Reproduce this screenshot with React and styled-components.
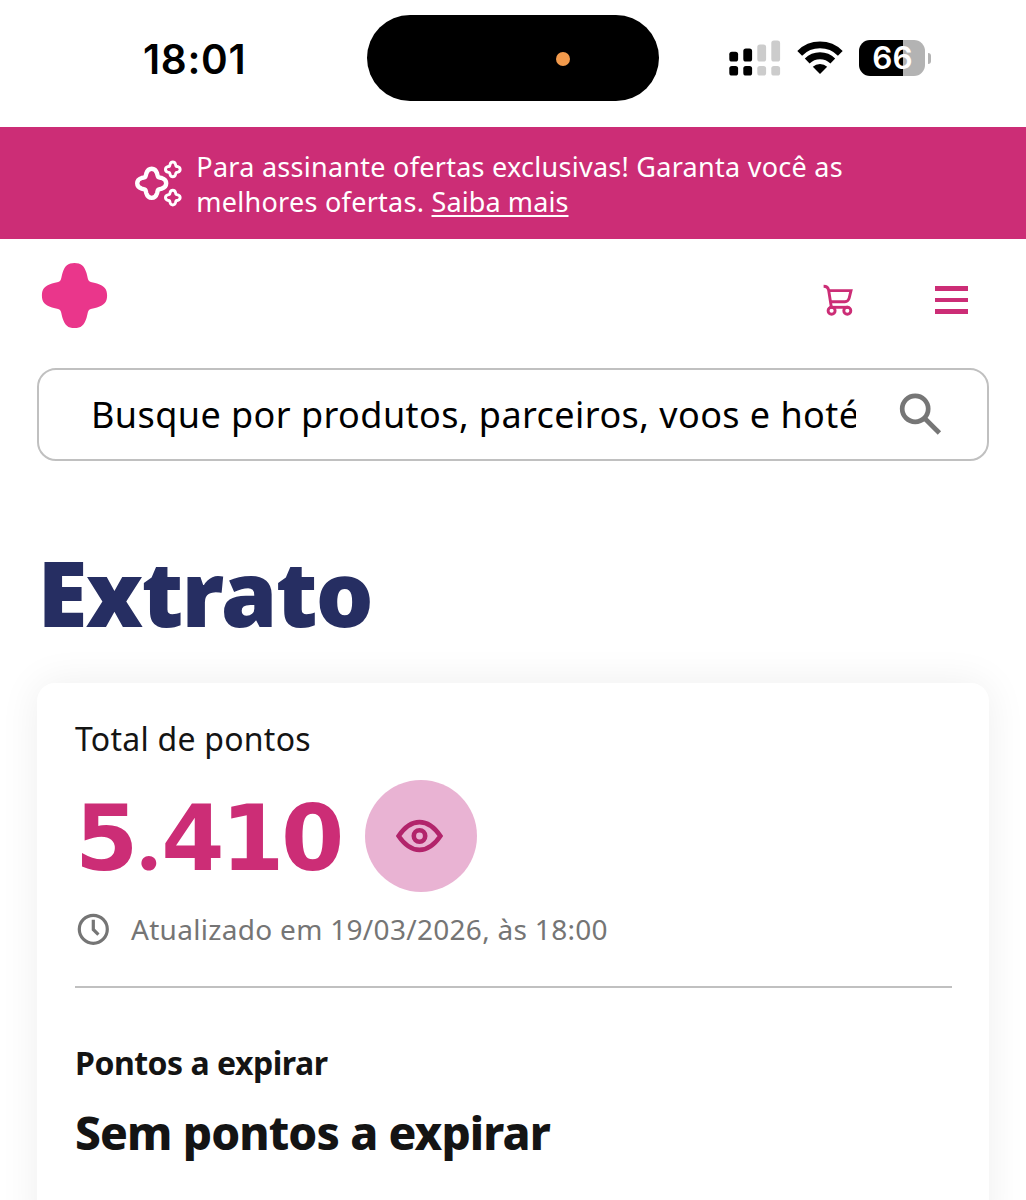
import React from 'react';
import styled, { createGlobalStyle } from 'styled-components';

const GlobalStyle = createGlobalStyle`
  * {
    box-sizing: border-box;
  }
  body {
    margin: 0;
    background: #ffffff;
    font-family: "Noto Sans", "Open Sans", sans-serif;
  }
  svg {
    display: block;
    flex: none;
  }
`

const Page = styled.div`
  display: flex;
  flex-direction: column;
  width: 1026px;
  height: 1200px;
  overflow: hidden;
  background: #ffffff;
`

/* status bar */
const StatusBar = styled.div`
  display: flex;
  flex: none;
  align-items: flex-start;
  height: 127px;
  padding: 15px 95px 0 143px;
`
const Time = styled.div`
  width: 224px;
  padding-top: 20px;
  font: 600 40.5px/50px Inter, sans-serif;
  letter-spacing: 0.7px;
  color: #000000;
`
const Island = styled.div`
  display: flex;
  align-items: center;
  justify-content: flex-end;
  width: 292px;
  height: 86px;
  padding-right: 89px;
  border-radius: 43px;
  background: #000000;
`
const RecordingDot = styled.div`
  width: 14px;
  height: 14px;
  margin-top: 2px;
  border-radius: 50%;
  background: #f39a4c;
`
const StatusIcons = styled.div`
  display: flex;
  align-items: flex-start;
  gap: 16px;
  margin-left: auto;
  padding-top: 25px;
`
const BatteryIcon = styled.div`
  display: flex;
  align-items: center;
  gap: 3px;
`
const BatteryBody = styled.div`
  width: 66px;
  height: 36px;
  padding-left: 1px;
  border-radius: 11px;
  background: linear-gradient(to right, #000000 66%, #b3b3b3 66%);
  font: 600 31.5px/36px Inter, sans-serif;
  text-align: center;
  color: #ffffff;
`
const BatteryTip = styled.div`
  width: 3px;
  height: 11px;
  border-radius: 0 5px 5px 0;
  background: #b3b3b3;
`

/* offers banner */
const Banner = styled.div`
  display: flex;
  flex: none;
  align-items: center;
  height: 112px;
  padding-left: 133px;
  background: #cc2d76;
`
const BannerText = styled.p`
  margin: 1px 0 0 12.3px;
  font-size: 27px;
  line-height: 35px;
  letter-spacing: 0.27px;
  white-space: nowrap;
  color: #ffffff;
`
const BannerLink = styled.a`
  letter-spacing: 0.1px;
  color: inherit;
  text-decoration: underline;
  text-decoration-thickness: 2px;
  text-underline-offset: 3px;
`

/* header */
const Header = styled.header`
  display: flex;
  flex: none;
  align-items: flex-start;
  height: 129px;
  padding: 23px 58px 0 41px;
`
const CartButton = styled.button`
  margin: 18px 79px 0 auto;
  padding: 0;
  border: none;
  background: transparent;
`
const Burger = styled.button`
  display: flex;
  flex-direction: column;
  gap: 7px;
  margin-top: 24px;
  padding: 0;
  border: none;
  background: transparent;

  div {
    width: 33px;
    height: 4.6px;
    background: #cc2d76;
  }
`
const SearchBox = styled.div`
  display: flex;
  flex: none;
  align-items: center;
  justify-content: space-between;
  height: 93px;
  margin: 0 37px;
  padding: 0 44px 0 52px;
  border: 2px solid #c0c0c0;
  border-radius: 19px;
`
const SearchText = styled.div`
  width: 765px;
  padding-top: 1px;
  overflow: hidden;
  font-size: 36px;
  line-height: 56px;
  letter-spacing: 0.44px;
  white-space: nowrap;
  color: #000000;
`

const Title = styled.h1`
  flex: none;
  margin: 81px 0 0 37.5px;
  font-size: 91px;
  font-weight: 900;
  line-height: 100px;
  letter-spacing: -1.7px;
  color: #262e62;
`

/* points card */
const Card = styled.section`
  flex: none;
  height: 560px;
  margin: 41px 37px 0;
  padding: 34px 38px 0;
  border-radius: 18px;
  background: #ffffff;
  box-shadow: 0 0 40px rgba(0, 0, 0, 0.07);
`
const Text = styled.p`
  margin: ${({ top }) => top || 0}px 0 0;
  font-size: ${({ size }) => size}px;
  font-weight: ${({ weight }) => weight || 400};
  line-height: ${({ line }) => line}px;
  letter-spacing: ${({ spacing }) => spacing || 0}px;
  white-space: nowrap;
  color: ${({ color }) => color || '#141414'};
`
const PointsRow = styled.div`
  display: flex;
  align-items: center;
  height: 112px;
  margin-top: 19px;
`
const Points = styled.div`
  width: 289.5px;
  padding-top: 2px;
  font: 700 91px/100px "DejaVu Sans", sans-serif;
  letter-spacing: -3.4px;
  white-space: nowrap;
  color: #cc2d76;

  span {
    margin: 0 5px 0 3px;
    font-family: Lato, sans-serif;
    font-weight: 900;
  }
`
const EyeButton = styled.button`
  display: flex;
  align-items: center;
  justify-content: center;
  width: 112px;
  height: 112px;
  padding: 0 1px 0 0;
  border: none;
  border-radius: 50%;
  background: #e9b3d3;
`
const Updated = styled.div`
  display: flex;
  align-items: center;
  gap: 21px;
  height: 40px;
  margin: 17px 0 37px;
  padding-left: 2px;
`
const Divider = styled.hr`
  width: 877px;
  height: 2px;
  margin: 0;
  border: none;
  background: #c0c0c0;
`

const STAR = 'M0 -32.6C6.5 -32.6 9.6 -30 12 -22.5C13.3 -18 13.2 -15.8 14.5 -14.5C15.8 -13.2 18 -13.3 22.5 -12C30 -9.6 32.6 -6.5 32.6 0C32.6 6.5 30 9.6 22.5 12C18 13.3 15.8 13.2 14.5 14.5C13.2 15.8 13.3 18 12 22.5C9.6 30 6.5 32.6 0 32.6C-6.5 32.6 -9.6 30 -12 22.5C-13.3 18 -13.2 15.8 -14.5 14.5C-15.8 13.2 -18 13.3 -22.5 12C-30 9.6 -32.6 6.5 -32.6 0C-32.6 -6.5 -30 -9.6 -22.5 -12C-18 -13.3 -15.8 -13.2 -14.5 -14.5C-13.2 -15.8 -13.3 -18 -12 -22.5C-9.6 -30 -6.5 -32.6 0 -32.6Z'

const Logo = () => (
    <svg width="67" height="67" viewBox="-33.5 -33.5 67 67">
        <path d={STAR} fill="#ea368b" />
    </svg>
)

const StarsIcon = () => (
    <svg width="51" height="52" viewBox="0 0 51 52" fill="none" stroke="#ffffff">
        <path d={STAR} transform="translate(18.7 26.3) scale(.445)" strokeWidth="9.8" />
        <path d={STAR} transform="translate(39.8 12.4) scale(.225)" strokeWidth="13" />
        <path d={STAR} transform="translate(39.8 40.6) scale(.225)" strokeWidth="13" />
    </svg>
)

const SignalIcon = () => (
    <svg width="52" height="37" viewBox="0 0 52 37">
        {[11.3, 8, 4, 0].map((y, i) => (
            <g key={i} fill={i < 2 ? '#000000' : '#cccccc'}>
                <rect x={0.3 + i * 14} y={y + 0.4} width="8.8" height={21.2 - y} rx="2.6" />
                <rect x={0.3 + i * 14} y="26" width="8.8" height="9.6" rx="2.6" />
            </g>
        ))}
    </svg>
)

const WifiIcon = () => (
    <svg width="46" height="36" viewBox="0 0 46 36">
        <g fill="none" stroke="#000000" strokeWidth="6.8">
            <path d="M2.7 13.3A28.9 28.9 0 0 1 43.3 13.3" />
            <path d="M10.2 21A18.2 18.2 0 0 1 35.8 21" />
        </g>
        <path d="M23 34L15.8 26.8A10.4 10.4 0 0 1 30.2 26.8Z" />
    </svg>
)

const CartIcon = () => (
    <svg width="36" height="38" viewBox="0 0 36 38" fill="none" stroke="#cc2d76" strokeWidth="2.9">
        <path d="M3.6 6.2C6.8 6.2 8.2 7.4 8.7 10.4L11.4 27.6" />
        <path d="M8.8 10.6H31L29.2 18C28.5 20.7 27.4 21.7 25 21.7H10.6" />
        <path d="M11 27.3H28" />
        <circle cx="11.6" cy="30.8" r="3.5" />
        <circle cx="27.3" cy="30.8" r="3.5" />
    </svg>
)

const SearchIcon = () => (
    <svg width="44" height="46" viewBox="0 0 44 46" fill="none" stroke="#767676" strokeWidth="4.7">
        <circle cx="16.2" cy="16.8" r="13" />
        <path d="M25.3 26L40.4 41" />
    </svg>
)

const EyeIcon = () => (
    <svg width="50" height="36" viewBox="0 0 50 36" fill="none" stroke="#b2246b" strokeWidth="4.6">
        <path d="M3.6 18C10 8.6 16.5 4.1 24.5 4.1S39 8.6 45.4 18C39 27.4 32.5 31.9 24.5 31.9S10 27.4 3.6 18Z" />
        <circle cx="24.5" cy="18" r="5.7" />
    </svg>
)

const ClockIcon = () => (
    <svg width="33" height="33" viewBox="0 0 33 33" fill="none" stroke="#757575" strokeWidth="3.2">
        <circle cx="16.3" cy="16.3" r="14" />
        <path d="M16.3 6.8V16.5L21.4 21.6" />
    </svg>
)

const App = () => (
    <Page>
        <GlobalStyle />
        <StatusBar>
            <Time>18:01</Time>
            <Island>
                <RecordingDot />
            </Island>
            <StatusIcons>
                <SignalIcon />
                <WifiIcon />
                <BatteryIcon>
                    <BatteryBody>66</BatteryBody>
                    <BatteryTip />
                </BatteryIcon>
            </StatusIcons>
        </StatusBar>
        <Banner>
            <StarsIcon />
            <BannerText>
                Para assinante ofertas exclusivas! Garanta você as<br />
                melhores ofertas. <BannerLink>Saiba mais</BannerLink>
            </BannerText>
        </Banner>
        <Header>
            <Logo />
            <CartButton>
                <CartIcon />
            </CartButton>
            <Burger>
                <div />
                <div />
                <div />
            </Burger>
        </Header>
        <SearchBox>
            <SearchText>Busque por produtos, parceiros, voos e hotéis</SearchText>
            <SearchIcon />
        </SearchBox>
        <Title>Extrato</Title>
        <Card>
            <Text size={32} line={44} spacing={0.25}>Total de pontos</Text>
            <PointsRow>
                <Points>5<span>.</span>410</Points>
                <EyeButton>
                    <EyeIcon />
                </EyeButton>
            </PointsRow>
            <Updated>
                <ClockIcon />
                <Text size={28} line={40} spacing={0.3} color="#757575">Atualizado em 19/03/2026, às 18:00</Text>
            </Updated>
            <Divider />
            <Text top={53} size={32} line={44} weight={700} spacing={-0.49}>Pontos a expirar</Text>
            <Text top={15} size={46} line={64} weight={800} spacing={-0.86}>Sem pontos a expirar</Text>
        </Card>
    </Page>
)

export default App;
